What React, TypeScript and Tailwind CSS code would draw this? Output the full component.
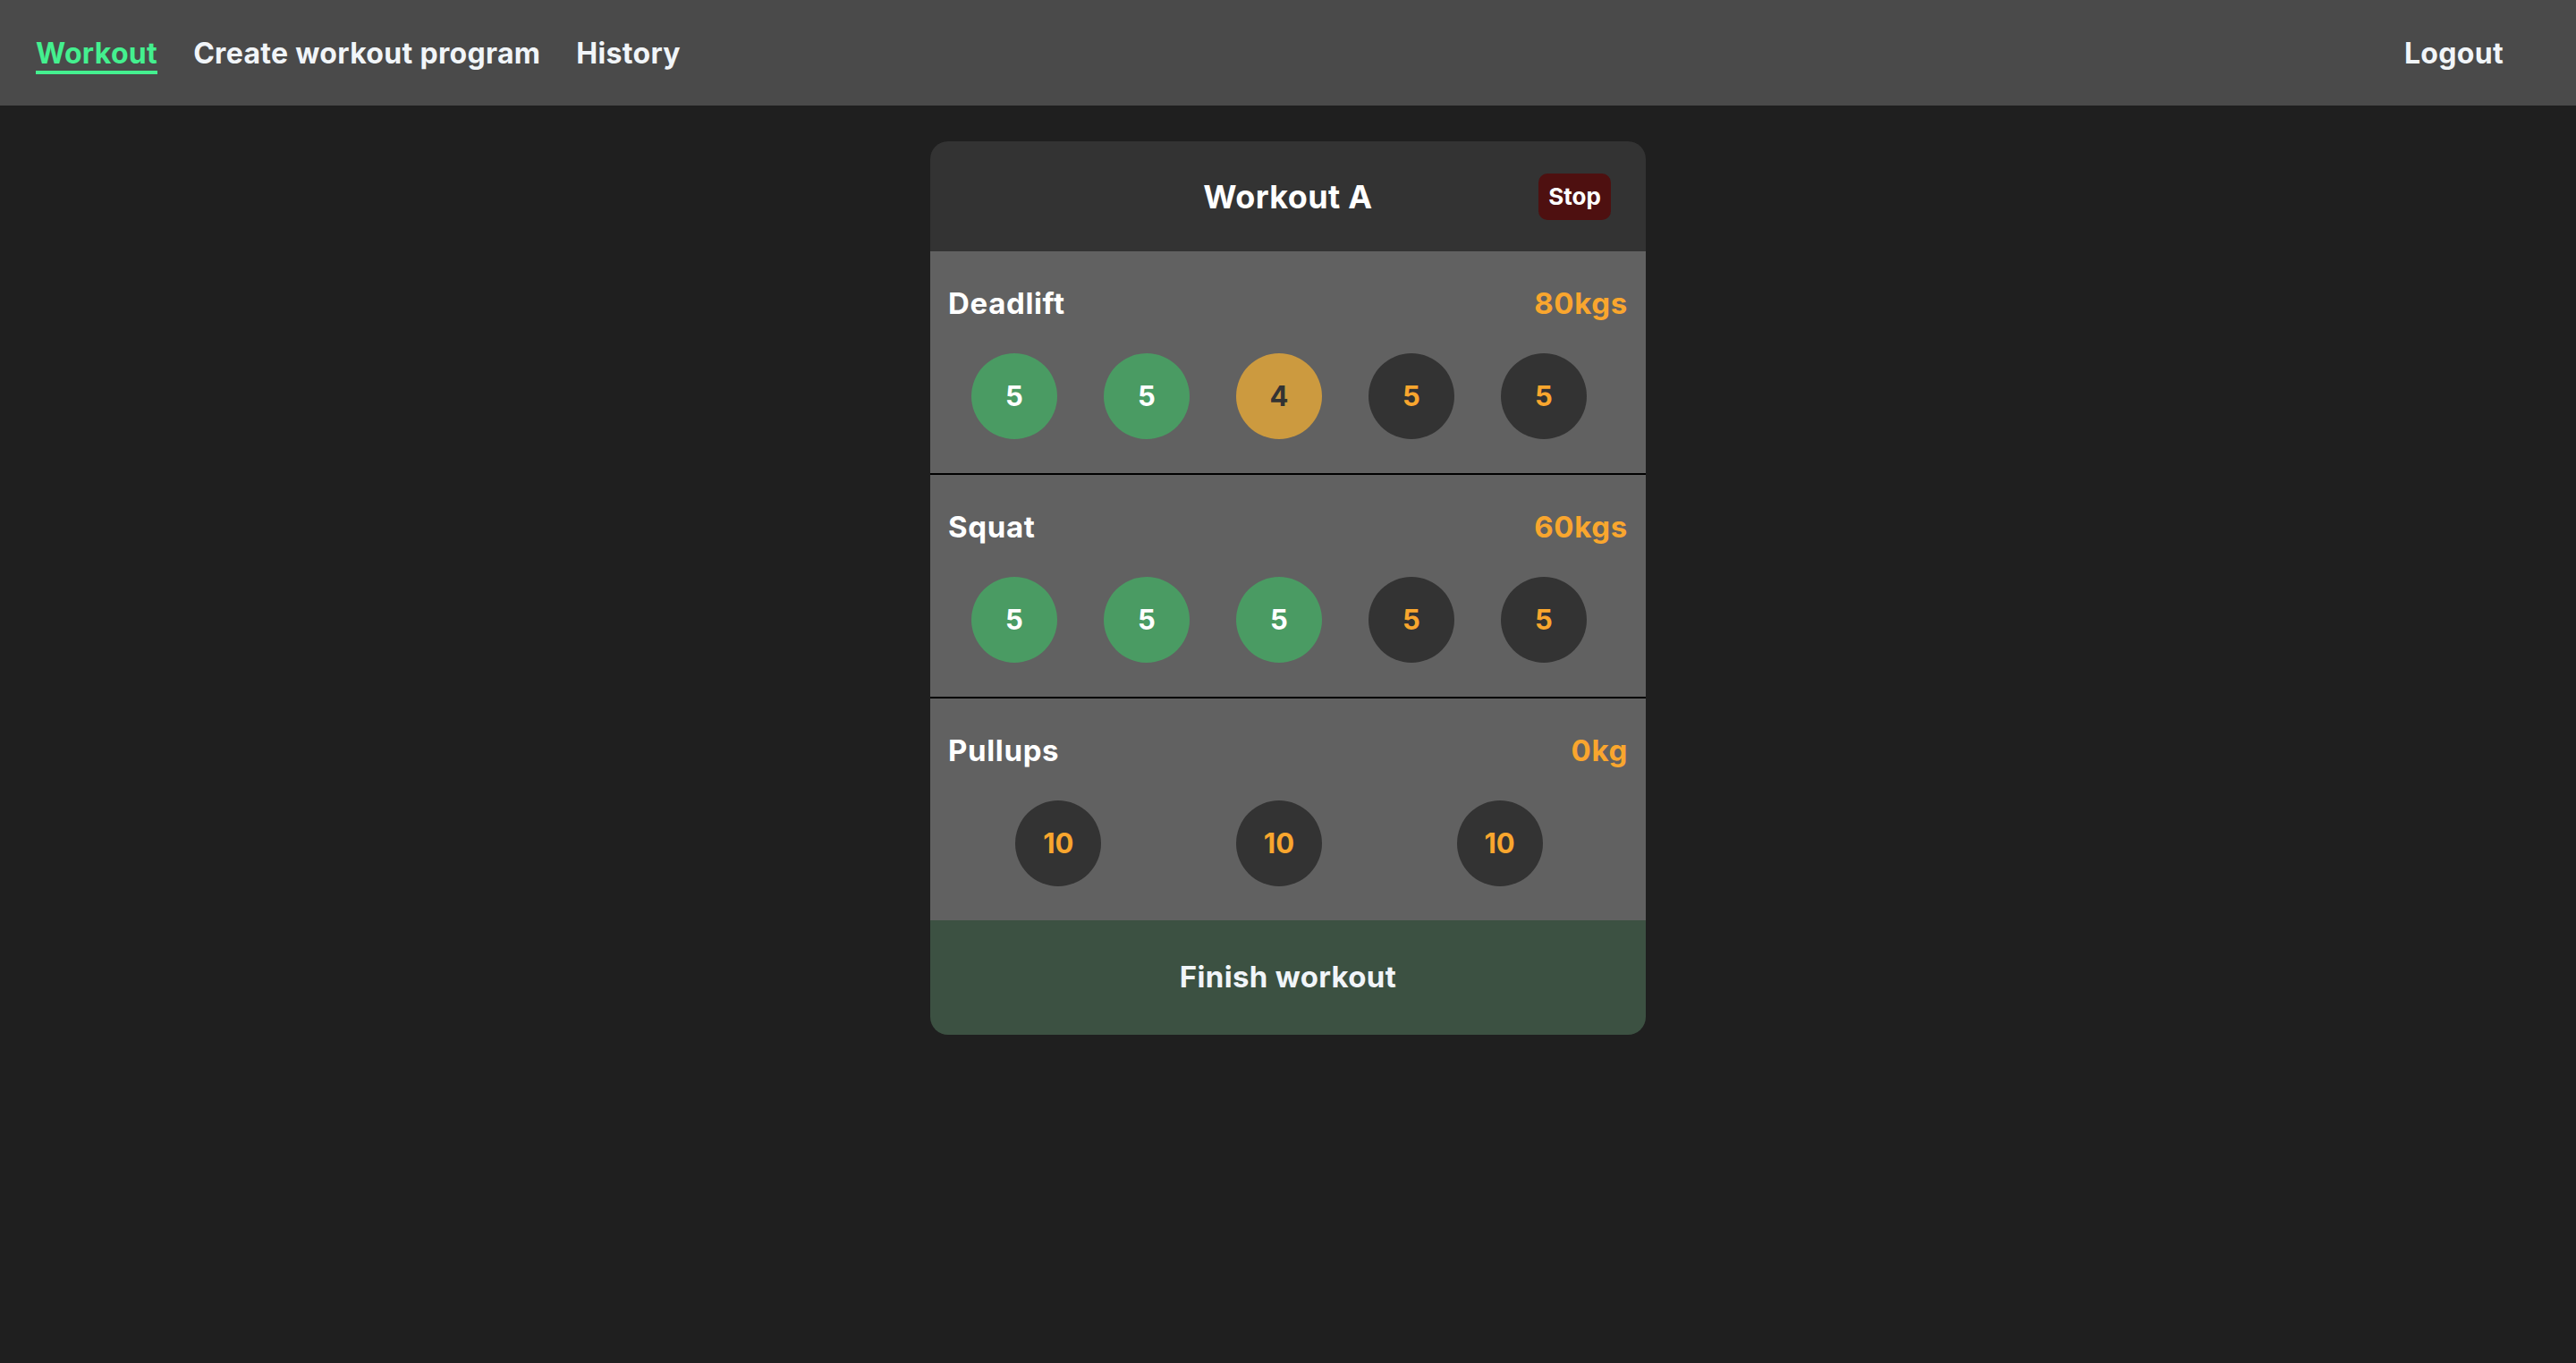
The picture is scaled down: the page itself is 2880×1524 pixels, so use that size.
import React from "react";

type SetState = "done" | "failed" | "todo";

const exercises: { name: string; weight: string; sets: { reps: number; state: SetState }[] }[] = [
  {
    name: "Deadlift",
    weight: "80kgs",
    sets: [
      { reps: 5, state: "done" },
      { reps: 5, state: "done" },
      { reps: 4, state: "failed" },
      { reps: 5, state: "todo" },
      { reps: 5, state: "todo" },
    ],
  },
  {
    name: "Squat",
    weight: "60kgs",
    sets: [
      { reps: 5, state: "done" },
      { reps: 5, state: "done" },
      { reps: 5, state: "done" },
      { reps: 5, state: "todo" },
      { reps: 5, state: "todo" },
    ],
  },
  {
    name: "Pullups",
    weight: "0kg",
    sets: [
      { reps: 10, state: "todo" },
      { reps: 10, state: "todo" },
      { reps: 10, state: "todo" },
    ],
  },
];

function Circle({ reps, state }: { reps: number; state: SetState }) {
  const cls =
    state === "done"
      ? "bg-[#4a9b63] text-white"
      : state === "failed"
      ? "bg-[#cc9a3f] text-[#333333]"
      : "bg-[#333333] text-[#f9a62e]";
  return (
    <div className={`w-[96px] h-[96px] rounded-full flex items-center justify-center text-[31px] font-bold ${cls}`}>
      {reps}
    </div>
  );
}

export default function App() {
  return (
    <div
      className="min-h-[1524px] bg-[#1f1f1f] text-[#f1f5f9]"
      style={{ fontFamily: "Inter, 'Noto Sans', sans-serif" }}
    >
      <nav className="h-[118px] bg-[#4a4a4a] flex items-start justify-between pl-[40px] pr-[81px] pt-[41px]">
        <div className="flex items-start gap-[40px] text-[32px] font-bold tracking-[0.01em]">
          <a className="text-[#44f08f] border-b-[4px] border-[#44f08f] leading-[38px]">Workout</a>
          <a className="leading-[38px]">Create workout program</a>
          <a className="leading-[38px]">History</a>
        </div>
        <a className="text-[32px] font-bold tracking-[0.01em] leading-[38px]">Logout</a>
      </nav>

      <main className="flex justify-center pt-[40px]">
        <div className="w-[800px] rounded-[20px] overflow-hidden">
          <div className="h-[123px] bg-[#333333] relative flex items-center justify-center">
            <h1 className="text-[36px] font-bold text-white tracking-[0.01em]">Workout A</h1>
            <button className="absolute right-[39px] top-1/2 -translate-y-1/2 h-[52px] w-[81px] rounded-[10px] bg-[#4e1010] text-white text-[26px] font-bold">
              Stop
            </button>
          </div>

          {exercises.map((ex, i) => (
            <div
              key={ex.name}
              className={`bg-[#616161] pt-[40px] ${i < exercises.length - 1 ? "h-[250px] border-b-[2px] border-black" : "h-[248px]"}`}
            >
              <div className="flex items-center justify-between px-[20px] h-[38px]">
                <span className="text-[33px] font-bold text-white tracking-[0.02em]">{ex.name}</span>
                <span className="text-[33px] font-bold text-[#f9a62e] tracking-[0.02em]">{ex.weight}</span>
              </div>
              <div className="mt-[36px] pl-[20px] pr-[40px] flex justify-around">
                {ex.sets.map((s, j) => (
                  <Circle key={j} reps={s.reps} state={s.state} />
                ))}
              </div>
            </div>
          ))}

          <button className="w-full h-[128px] bg-[#3c5142] text-[33px] font-bold text-[#f1f5f9] tracking-[0.01em] flex items-center justify-center">
            Finish workout
          </button>
        </div>
      </main>
    </div>
  );
}
